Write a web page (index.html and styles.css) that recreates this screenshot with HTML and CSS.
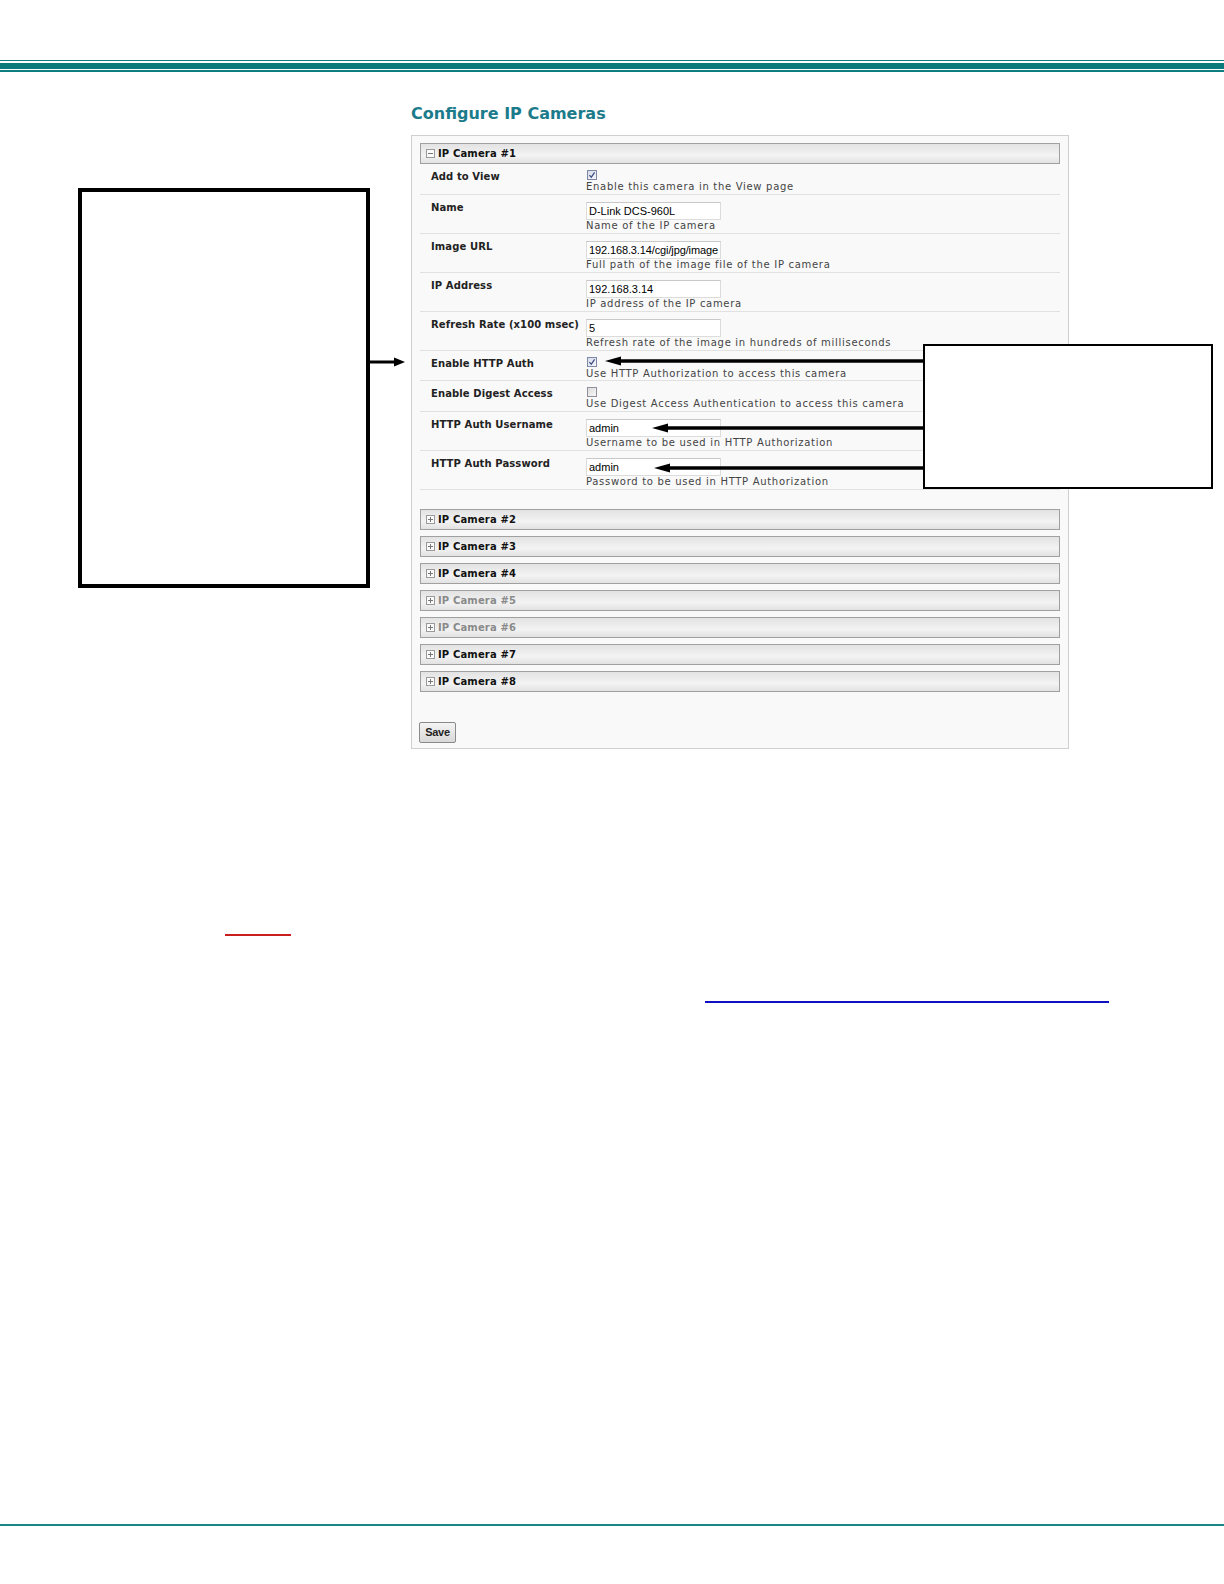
FILE: index.html
```html
<!DOCTYPE html>
<html>
<head>
<meta charset="utf-8">
<title>Configure IP Cameras</title>
<link rel="stylesheet" href="styles.css">
</head>
<body>
<div class="rule-top">
  <div class="rt-thin"></div>
  <div class="rt-thick"></div>
  <div class="rt-low"></div>
</div>

<main class="page">
  <h1 class="title">Configure IP Cameras</h1>
  <section class="panel">
    <div class="cam">
      <div class="cam-head"><span class="tog minus"></span><span>IP Camera #1</span></div>
      <div class="rows">
        <div class="row chk-row">
          <div class="lbl">Add to View</div>
          <div class="val"><span class="cb checked"><svg viewBox="0 0 8 8"><path d="M1.4 4.2 L3.3 6.2 L6.6 1.4" fill="none" stroke="#3b4f86" stroke-width="1.2"/></svg></span><div class="desc">Enable this camera in the View page</div></div>
        </div>
        <div class="row">
          <div class="lbl">Name</div>
          <div class="val"><div class="inp">D-Link DCS-960L</div><div class="desc">Name of the IP camera</div></div>
        </div>
        <div class="row">
          <div class="lbl">Image URL</div>
          <div class="val"><div class="inp tight">192.168.3.14/cgi/jpg/image</div><div class="desc">Full path of the image file of the IP camera</div></div>
        </div>
        <div class="row">
          <div class="lbl">IP Address</div>
          <div class="val"><div class="inp">192.168.3.14</div><div class="desc">IP address of the IP camera</div></div>
        </div>
        <div class="row">
          <div class="lbl">Refresh Rate (x100 msec)</div>
          <div class="val"><div class="inp">5</div><div class="desc">Refresh rate of the image in hundreds of milliseconds</div></div>
        </div>
        <div class="row chk-row">
          <div class="lbl">Enable HTTP Auth</div>
          <div class="val"><span class="cb checked"><svg viewBox="0 0 8 8"><path d="M1.4 4.2 L3.3 6.2 L6.6 1.4" fill="none" stroke="#3b4f86" stroke-width="1.2"/></svg></span><div class="desc">Use HTTP Authorization to access this camera</div></div>
        </div>
        <div class="row chk-row">
          <div class="lbl">Enable Digest Access</div>
          <div class="val"><span class="cb"></span><div class="desc">Use Digest Access Authentication to access this camera</div></div>
        </div>
        <div class="row">
          <div class="lbl">HTTP Auth Username</div>
          <div class="val"><div class="inp">admin</div><div class="desc">Username to be used in HTTP Authorization</div></div>
        </div>
        <div class="row">
          <div class="lbl">HTTP Auth Password</div>
          <div class="val"><div class="inp">admin</div><div class="desc">Password to be used in HTTP Authorization</div></div>
        </div>
      </div>
    </div>

    <div class="cam-list">
      <div class="cam-head"><span class="tog plus"></span><span>IP Camera #2</span></div>
      <div class="cam-head"><span class="tog plus"></span><span>IP Camera #3</span></div>
      <div class="cam-head"><span class="tog plus"></span><span>IP Camera #4</span></div>
      <div class="cam-head off"><span class="tog plus"></span><span>IP Camera #5</span></div>
      <div class="cam-head off"><span class="tog plus"></span><span>IP Camera #6</span></div>
      <div class="cam-head"><span class="tog plus"></span><span>IP Camera #7</span></div>
      <div class="cam-head"><span class="tog plus"></span><span>IP Camera #8</span></div>
    </div>

    <button class="save" type="button">Save</button>
  </section>

  <div class="callout callout-left"></div>
  <svg class="arrow arrow-left" viewBox="0 0 35 12" width="35" height="12"><line x1="0" y1="6" x2="26" y2="6" stroke="#000" stroke-width="3"/><polygon points="24,1.5 35,6 24,10.5" fill="#000"/></svg>

  <div class="callout callout-right"></div>
  <svg class="arrow arrow-r1" viewBox="0 0 318 12" width="318" height="12"><polygon points="0,6 16,1.5 16,10.5" fill="#000"/><line x1="14" y1="6" x2="318" y2="6" stroke="#000" stroke-width="3.4"/></svg>
  <svg class="arrow arrow-r2" viewBox="0 0 271 12" width="271" height="12"><polygon points="0,6 16,1.5 16,10.5" fill="#000"/><line x1="14" y1="6" x2="271" y2="6" stroke="#000" stroke-width="3.4"/></svg>
  <svg class="arrow arrow-r3" viewBox="0 0 269 12" width="269" height="12"><polygon points="0,6 16,1.5 16,10.5" fill="#000"/><line x1="14" y1="6" x2="269" y2="6" stroke="#000" stroke-width="3.4"/></svg>
</main>

<div class="doc">
  <div class="link link-red"></div>
  <div class="link link-blue"></div>
</div>

<div class="rule-bottom"></div>
</body>
</html>
```

FILE: styles.css
```css
html, body {
  margin: 0;
  padding: 0;
  background: #ffffff;
}

body {
  position: relative;
  width: 1224px;
  min-height: 1584px;
  font-family: "DejaVu Sans", Verdana, sans-serif;
}

/* top rule */
.rule-top {
  padding-top: 60px;
}
.rt-thin {
  height: 1px;
  background: #0d7f7f;
}
.rt-thick {
  height: 6px;
  margin-top: 2px;
  background: #0a7b7b;
}
.rt-low {
  height: 2px;
  margin-top: 1px;
  background: #0d7f7f;
}

/* page */
.page {
  padding-left: 411px;
}

.title {
  margin: 32px 0 11px 0;
  font-family: "DejaVu Sans", Verdana, sans-serif;
  font-weight: bold;
  font-size: 16px;
  line-height: 20px;
  color: #1c7b8b;
}

.panel {
  box-sizing: content-box;
  width: 640px;
  border: 1px solid #d0d0d0;
  background: #f9f9f9;
  padding: 7px 8px 5px 8px;
}

.cam-head {
  box-sizing: border-box;
  height: 21px;
  border: 1px solid #a0a0a0;
  background: linear-gradient(#e3e3e3 0%, #ececec 35%, #f3f3f3 60%, #e2e2e2 100%);
  display: flex;
  align-items: center;
  padding-left: 5px;
  gap: 3px;
  font-weight: bold;
  font-size: 10px;
  letter-spacing: 0.15px;
  color: #111;
}
.cam-head.off {
  color: #8a8a8a;
}

.tog {
  position: relative;
  width: 7px;
  height: 7px;
  border: 1px solid #9a9a9a;
  background: #fbfbfb;
  flex: none;
}
.tog::before {
  content: "";
  position: absolute;
  left: 1px;
  top: 3px;
  width: 5px;
  height: 1px;
  background: #777;
}
.tog.plus::after {
  content: "";
  position: absolute;
  left: 3px;
  top: 1px;
  width: 1px;
  height: 5px;
  background: #777;
}

.rows {
  display: flex;
  flex-direction: column;
}

.row {
  display: grid;
  grid-template-columns: 155px 1fr;
  padding: 7px 0 1px 11px;
  border-bottom: 1px solid #e1e1e1;
}
.row.chk-row {
  padding-top: 6px;
  padding-bottom: 0.5px;
}

.lbl {
  font-weight: bold;
  font-size: 10px;
  line-height: 12px;
  letter-spacing: 0.1px;
  color: #222;
}
.chk-row .lbl {
  margin-top: 1px;
}

.val {
  display: flex;
  flex-direction: column;
  align-items: flex-start;
}

.desc {
  font-size: 10px;
  line-height: 12px;
  letter-spacing: 0.7px;
  color: #444;
}

.inp {
  box-sizing: content-box;
  width: 131px;
  height: 16px;
  border: 1px solid #dcdcdc;
  border-top-color: #c8c8c8;
  background: #fff;
  font-family: "Liberation Sans", Arial, sans-serif;
  font-size: 11px;
  line-height: 17px;
  padding-left: 2px;
  overflow: hidden;
  white-space: nowrap;
  color: #000;
}
.inp.tight {
  letter-spacing: -0.12px;
}

.cb {
  display: block;
  position: relative;
  width: 8px;
  height: 8px;
  margin: 0 0 1px 1px;
  border: 1px solid #8e8f98;
  background: linear-gradient(135deg, #dcdcdc, #f8f8f8);
}
.cb svg {
  position: absolute;
  left: 0;
  top: 0;
  width: 8px;
  height: 8px;
}
.cb.checked {
  border-color: #7d87a8;
  background: linear-gradient(135deg, #d9dce8, #f6f6fa);
}

.cam-list {
  display: flex;
  flex-direction: column;
  gap: 6px;
  margin-top: 19px;
}

.save {
  display: block;
  margin: 30px 0 0 -1px;
  width: 37px;
  height: 21px;
  padding: 0;
  border: 1px solid #8a8a8a;
  border-radius: 2px;
  background: linear-gradient(#f4f4f4, #d8d8d8);
  font-family: "Liberation Sans", Arial, sans-serif;
  font-size: 11px;
  font-weight: bold;
  color: #222;
  letter-spacing: -0.3px;
}

/* annotations */
.callout {
  position: absolute;
  background: #fff;
  box-sizing: border-box;
}
.callout-left {
  left: 78px;
  top: 188px;
  width: 292px;
  height: 400px;
  border: 4px solid #000;
}
.callout-right {
  left: 923px;
  top: 344px;
  width: 290px;
  height: 145px;
  border: 2px solid #000;
}

.arrow {
  position: absolute;
  display: block;
}
.arrow-left {
  left: 370px;
  top: 356px;
}
.arrow-r1 {
  left: 605px;
  top: 355px;
}
.arrow-r2 {
  left: 652px;
  top: 422px;
}
.arrow-r3 {
  left: 654px;
  top: 462px;
}

/* document text area (text itself is blank in the source) */
.doc {
  padding-top: 185px;
}
.link {
  height: 0;
}
.link-red {
  margin-left: 225px;
  width: 66px;
  border-bottom: 2px solid #c81e1e;
}
.link-blue {
  margin-top: 65px;
  margin-left: 705px;
  width: 404px;
  border-bottom: 2px solid #1010c0;
}

.rule-bottom {
  margin-top: 521px;
  height: 2px;
  background: #1a8585;
}
```
